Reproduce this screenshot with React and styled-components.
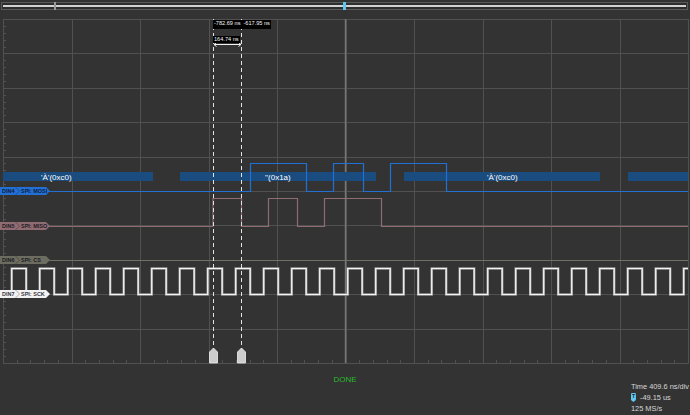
import React from 'react';
import styled, { createGlobalStyle } from 'styled-components';

const Global = createGlobalStyle`
  html, body { margin: 0; padding: 0; background: #333333; }
  body { font-family: "Liberation Sans", Arial, sans-serif; }
`;

const FONT = '"Liberation Sans", Arial, sans-serif';

const Screen = styled.div`
  width: 690px;
  height: 415px;
  background: #333333;
  display: flex;
  flex-direction: column;
  overflow: hidden;
  font-family: ${FONT};
`;

const TopBar = styled.div`
  height: 19px;
  box-sizing: border-box;
  padding: 2px 2px 0 1px;
  flex: none;
`;

const Track = styled.div`
  position: relative;
  height: 8px;
  box-sizing: border-box;
  border: 1px solid #5a5a5a;
  background: #2e2e2e;
  display: flex;
  align-items: center;
`;

const TrackLine = styled.div`
  flex: 1;
  height: 2px;
  margin: 0 1px;
  background: #d2d2d2;
`;

const Marker = styled.div`
  position: absolute;
  top: -1px;
  bottom: -1px;
  left: ${(p) => p.$x}px;
  width: ${(p) => p.$w}px;
  background: ${(p) => p.$color};
`;

const Scope = styled.div`
  position: relative;
  height: 345px;
  flex: none;
`;

const Plot = styled.svg`
  display: block;
`;

const Tag = styled.div`
  position: absolute;
  left: 0;
  top: ${(p) => p.$top}px;
  width: 50px;
  height: 8px;
  box-sizing: border-box;
  display: flex;
  align-items: center;
  padding-left: 2px;
  background: ${(p) => p.$bg};
  color: rgba(10, 10, 20, 0.85);
  font: 600 5.5px/8px ${FONT};
  white-space: nowrap;
  clip-path: polygon(0 0, calc(100% - 4px) 0, 100% 50%, calc(100% - 4px) 100%, 0 100%);
`;

const TagName = styled.span`
  width: 13px;
`;

const TagSep = styled.svg`
  width: 5px;
  height: 8px;
  margin-right: 1px;
  flex: none;
`;

const Readout = styled.div`
  position: absolute;
  left: ${(p) => p.$x}px;
  top: ${(p) => p.$y}px;
  height: ${(p) => p.$h}px;
  display: flex;
  align-items: center;
  gap: 3px;
  padding: 0 1px;
  background: #000;
  color: #f4f4f4;
  font: 5.6px/1 ${FONT};
  white-space: nowrap;
`;

const Footer = styled.div`
  flex: 1;
  display: grid;
  grid-template-columns: 1fr auto 1fr;
`;

const Status = styled.div`
  grid-column: 2;
  padding-top: 11px;
  color: #2cb82c;
  font: 8px/10px ${FONT};
`;

const Info = styled.div`
  grid-column: 3;
  justify-self: end;
  align-self: end;
  display: flex;
  flex-direction: column;
  padding: 0 1px 1px 0;
  color: #d8d8d8;
  font: 7.4px/11px ${FONT};
  white-space: nowrap;
`;

const InfoRow = styled.div`
  display: flex;
  align-items: center;
`;

const Badge = styled.span`
  width: 5px;
  height: 9px;
  margin-right: 4px;
  display: inline-flex;
  justify-content: center;
  align-items: flex-start;
  background: #62c8ee;
  color: #0f2a3a;
  font: bold 5px/6px ${FONT};
  border-radius: 1px 1px 0 0;
  clip-path: polygon(0 0, 100% 0, 100% 78%, 50% 100%, 0 78%);
`;

const X0 = 3;
const DX = 68.5;
const Y0 = 19;
const DY = 34.4;

const gx = Array.from({ length: 11 }, (_, i) => Math.round(X0 + i * DX) + 0.5);
const gy = Array.from({ length: 11 }, (_, j) => Math.round(Y0 + j * DY) + 0.5);

const leftTicks = Array.from({ length: 50 }, (_, k) => Y0 + k * (DY / 5)).filter((_, k) => k % 5 !== 0);
const bottomTicks = Array.from({ length: 50 }, (_, k) => X0 + k * (DX / 5)).filter((_, k) => k % 5 !== 0);

function sckPath() {
  let d = 'M3 294.5';
  for (let k = 0; k < 25; k++) {
    const r = 11.7 + 28 * k;
    const f = r + 14.5;
    d += ` H${r.toFixed(1)} V268.5`;
    if (f < 688) d += ` H${f.toFixed(1)} V294.5`;
    else d += ' H688';
  }
  if (!d.endsWith('H688')) d += ' H688';
  return d;
}

const MOSI = 'M3 191.5 H250.5 V163.5 H306.5 V191.5 H333.5 V163.5 H363.5 V191.5 H390.5 V163.5 H446.5 V191.5 H688';
const MISO = 'M3 226.5 H213 V198.5 H241.5 V226.5 H268.5 V198.5 H297.5 V226.5 H324.5 V198.5 H381.5 V226.5 H688';
const BAR = [
  [3, 153],
  [180, 376],
  [404, 600],
  [628, 688],
];
const DECODED = [
  [41, "'À'(0xc0)"],
  [265, "''(0x1a)"],
  [487, "'À'(0xc0)"],
];

const CHANNELS = [
  { name: 'DIN4', proto: 'SPI: MOSI', bg: '#2270d4', top: 168 },
  { name: 'DIN5', proto: 'SPI: MISO', bg: '#8e6c72', top: 203 },
  { name: 'DIN6', proto: 'SPI: CS', bg: '#6c6c60', top: 237 },
  { name: 'DIN7', proto: 'SPI: SCK', bg: '#f2f2f2', top: 271 },
];

function Handle({ x }) {
  const pts = `${x},348 ${x + 4},352 ${x + 4},363 ${x - 4},363 ${x - 4},352`;
  return <polygon points={pts} fill="#cdcdcd" stroke="#efefef" strokeWidth="0.8" />;
}

export default function App() {
  return (
    <Screen>
      <Global />
      <TopBar>
        <Track>
          <TrackLine />
          <Marker $x={52} $w={2} $color="#9a9a9a" />
          <Marker $x={341} $w={3} $color="#5cc6f0" />
        </Track>
      </TopBar>

      <Scope>
        <Plot width="690" height="345" viewBox="0 19 690 345">
          <g stroke="#515151" strokeWidth="1">
            {gx.map((x) => (
              <line key={'v' + x} x1={x} y1={19} x2={x} y2={363.5} />
            ))}
            {gy.map((y) => (
              <line key={'h' + y} x1={3} y1={y} x2={688.5} y2={y} />
            ))}
            {leftTicks.map((y) => (
              <line key={'lt' + y} x1={3} y1={Math.round(y) + 0.5} x2={6} y2={Math.round(y) + 0.5} />
            ))}
            {bottomTicks.map((x) => (
              <line key={'bt' + x} x1={Math.round(x) + 0.5} y1={360} x2={Math.round(x) + 0.5} y2={363} />
            ))}
          </g>
          <line x1={345.5} y1={19} x2={345.5} y2={363} stroke="#787878" strokeWidth="1.4" />

          <line x1={3} y1={260.5} x2={688} y2={260.5} stroke="#717164" strokeWidth="1.2" />
          <path d={MISO} fill="none" stroke="#8e6c72" strokeWidth="1.2" />

          {BAR.map(([a, b]) => (
            <rect key={a} x={a} y={172} width={b - a} height={9} fill="#1b4c80" />
          ))}
          {DECODED.map(([x, t]) => (
            <text key={x} x={x} y={180} fill="#ffffff" fontSize="8" fontFamily={FONT}>
              {t}
            </text>
          ))}
          <path d={MOSI} fill="none" stroke="#2270d4" strokeWidth="1.2" />

          <path d={sckPath()} fill="none" stroke="#9a9a9a" strokeWidth="2.4" />
          <path d={sckPath()} fill="none" stroke="#f4f4f4" strokeWidth="1.2" />

          <g stroke="#e2e2e2" strokeWidth="1" strokeDasharray="4 3">
            <line x1={213.5} y1={19} x2={213.5} y2={349} />
            <line x1={241.5} y1={19} x2={241.5} y2={349} />
          </g>
          <Handle x={213.5} />
          <Handle x={241.5} />

          <g stroke="#f4f4f4" strokeWidth="1" fill="none">
            <line x1={214} y1={44.5} x2={241} y2={44.5} />
            <path d="M216.5 42.5 L214 44.5 L216.5 46.5" />
            <path d="M238.5 42.5 L241 44.5 L238.5 46.5" />
          </g>
        </Plot>

        {CHANNELS.map((c) => (
          <Tag key={c.name} $bg={c.bg} $top={c.top}>
            <TagName>{c.name}</TagName>
            <TagSep viewBox="0 0 5 8">
              <path d="M0.5 0 L4.5 4 L0.5 8" fill="none" stroke="rgba(0,0,0,0.35)" strokeWidth="0.8" />
            </TagSep>
            <span>{c.proto}</span>
          </Tag>
        ))}

        <Readout $x={213} $y={1} $h={8.5}>
          <span>-782.69 ns</span>
          <span>-617.95 ns</span>
        </Readout>
        <Readout $x={213} $y={17} $h={7}>
          <span>164.74 ns</span>
        </Readout>
      </Scope>

      <Footer>
        <Status>DONE</Status>
        <Info>
          <InfoRow>Time 409.6 ns/div</InfoRow>
          <InfoRow>
            <Badge>T</Badge>
            -49.15 us
          </InfoRow>
          <InfoRow>125 MS/s</InfoRow>
        </Info>
      </Footer>
    </Screen>
  );
}
